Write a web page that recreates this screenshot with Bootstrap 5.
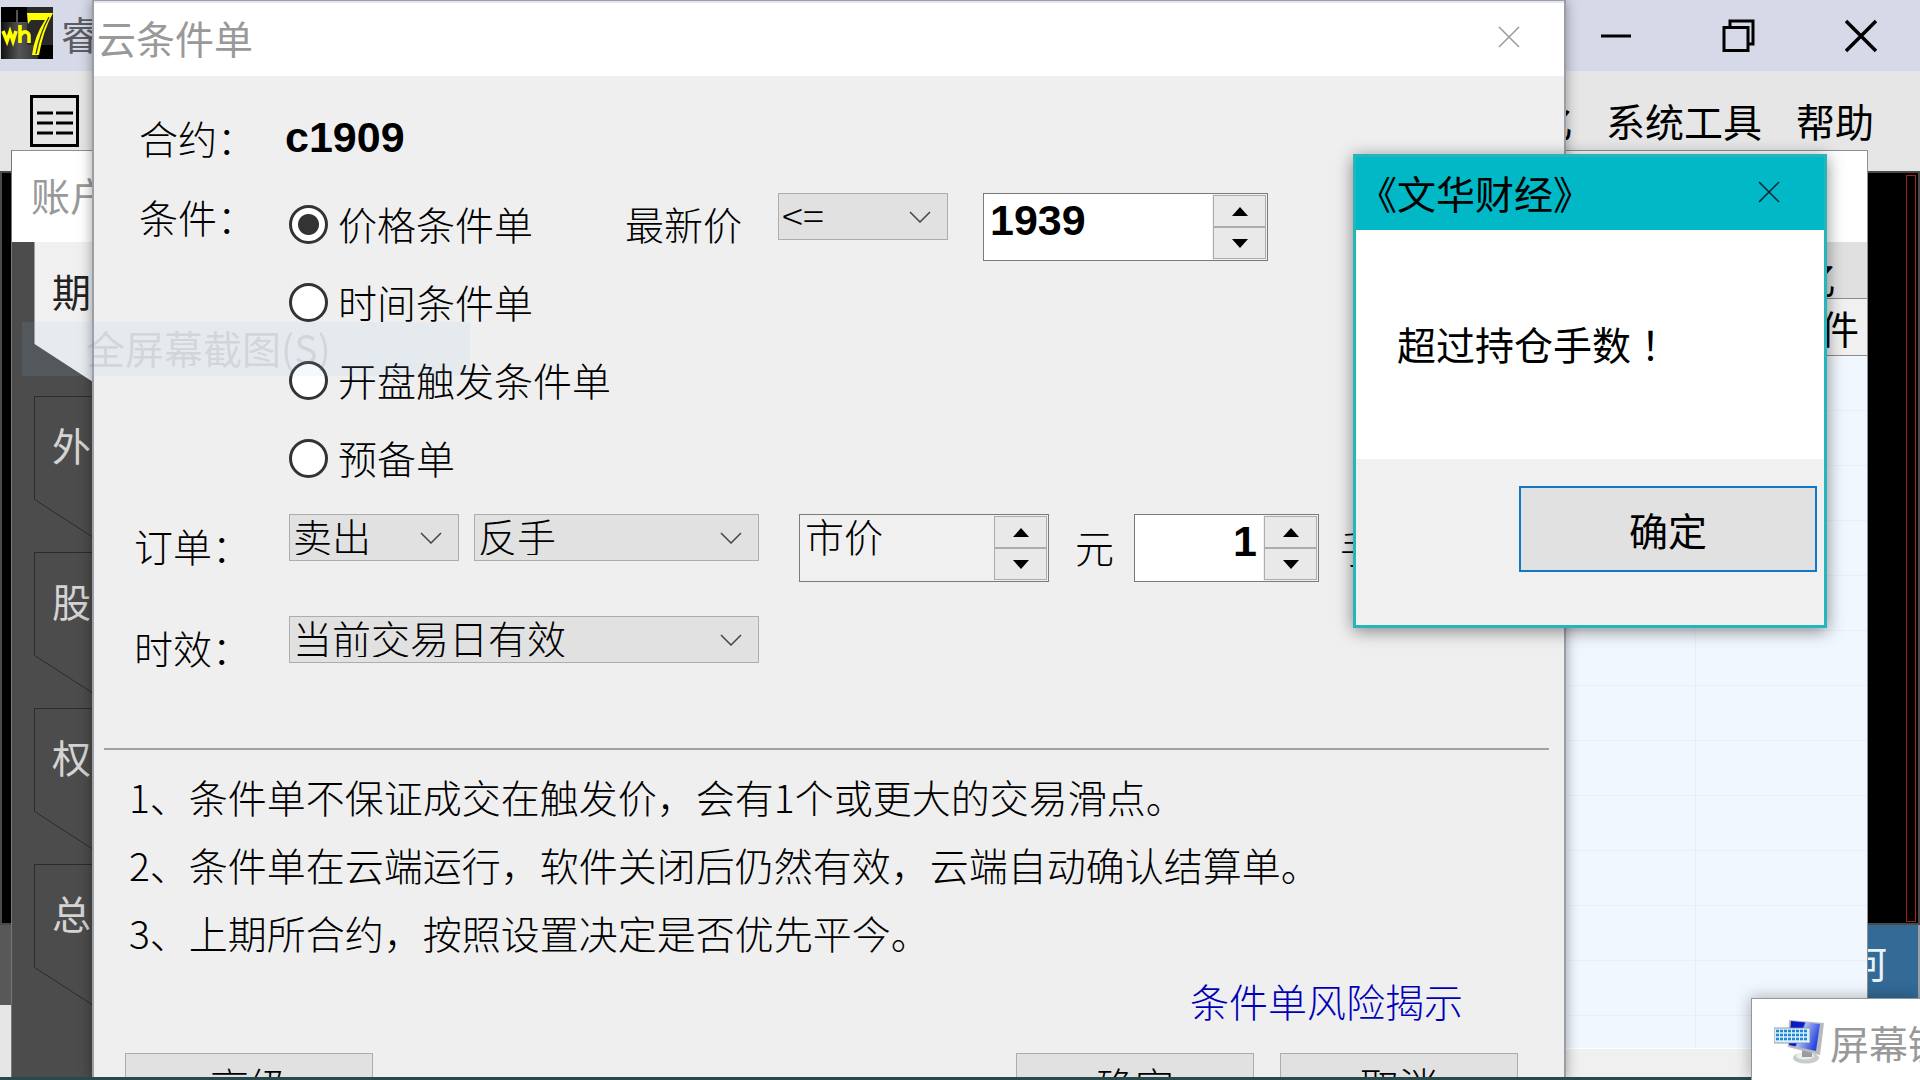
<!DOCTYPE html>
<html lang="zh-CN">
<head>
<meta charset="utf-8">
<meta name="viewport" content="width=device-width, initial-scale=1">
<title>云条件单</title>
<link href="https://cdn.jsdelivr.net/npm/bootstrap@5.3.0/dist/css/bootstrap.min.css" rel="stylesheet">
<style>
  body { font-family: "Noto Sans CJK SC", "Liberation Sans", sans-serif; font-size: 39px; line-height: 52px; color: #000; background: #e6e6e6; }
  svg { display: block; }
  .bare { border: 0; background: transparent; padding: 0; color: inherit; }
  .thin { font-weight: 300; }

  /* trading terminal behind the dialogs */
  .terminal { height: 100vh; }
  .term-title { height: 71px; background: #d6d9e8; padding: 0 43px 6px 1px; color: #5c5d63; }
  .term-controls { gap: 90px; color: #000; padding-top: 6px; }
  .term-menu { height: 100px; background: #e6e6e6; padding: 0 46px 0 30px; }
  .term-menu nav { gap: 34px; padding-bottom: 2px; }
  .term-menu a { color: #000; text-decoration: none; }
  .chart { height: 754px; background: #000; border: 2px solid #4a4a4a; }
  .chart-frame { width: 10px; margin: 2px 2px 1px; border: 1px solid #a32217; }
  .ticker { height: 80px; background: linear-gradient(90deg, #585858 0 50%, #336a96 50%); color: #e8f2fa; padding: 0 31px 8px 0; border-right: 2px solid #9aa0a5; }

  .win { position: absolute; }
  .win-title { color: #999; background: #fff; }

  /* account window */
  .account { left: 11px; right: 52px; top: 150px; bottom: 0; border: 1px solid #8f8f8f; border-bottom: 0; border-left-color: #777; }
  .account .win-title { height: 91px; padding: 17px 19px; }
  .acc-side { width: 220px; background: #4c4c4c; padding-left: 22px; }
  .acc-tab { position: relative; height: 156px; color: #d4d4d4; padding: 22px 18px; width: 100%; }
  .acc-tab.active { color: #222; height: 154px; }
  .acc-tab svg { position: absolute; left: 0; top: 0; }
  .acc-tab span { position: relative; }
  .acc-main { background: #f1f7fe; }
  .acc-tools { height: 56px; background: #e0e0e0; padding: 10px 31px 0 0; overflow: hidden; }
  .acc-head { height: 58px; background: #f0f0f0; border-top: 1px solid #8c8c8c; border-bottom: 1px solid #8c8c8c; padding-right: 8px; }
  .acc-grid { height: 693px; border-bottom: 1px solid #fff;
    background: linear-gradient(90deg, transparent calc(100% - 172px), #e9eff9 calc(100% - 172px) calc(100% - 171px), transparent calc(100% - 171px)), repeating-linear-gradient(#f1f7fe 0 54px, #e9eff9 54px 55px); }
  .acc-foot { background: #f0f0f0; }

  /* conditional order dialog */
  .order { left: 92px; right: 354px; top: 0; bottom: 0; border: 2px solid #9c9ea6; border-width: 1px 2px 0; background: #efefef; box-shadow: 0 0 12px rgba(0,0,0,.38); overflow: hidden; }
  .order .win-title { height: 75px; padding: 0 44px 5px 3px; border-top: 2px solid #e3e5f0; }
  .order-form { padding: 35px 10px 0; }
  .form-line { padding-left: 35px; }
  .form-line.low { padding-left: 30px; }
  .cap { width: 150px; flex: none; }
  .cap-near { width: 146px; }
  .low .cap { width: 155px; padding-top: 5px; }
  .bold-num { font-family: "Liberation Sans", Arial, sans-serif; font-weight: 700; font-size: 43px; }
  .cond-line { margin-top: 22px; }
  .cond-line .cap { padding-top: 5px; }
  .radio-line { height: 78px; gap: 10px; }
  .radio-line .form-check-input { width: 39px; height: 39px; margin: 0; border: 3px solid #333; background-color: #fff; flex: none; box-shadow: none; }
  .radio-line .form-check-input:checked { background-color: #fff; background-image: radial-gradient(circle, #333 0 10px, transparent 11px); }
  .radio-line label { padding-bottom: 2px; }
  .drop { height: 47px; width: 170px; flex: none; border: 1px solid #adadad; border-radius: 0; background-color: #e1e1e1; color: #000; font-size: 39px; line-height: 39px; font-weight: 300; padding: 0 48px 4px 3px;
    background-image: url("data:image/svg+xml,%3Csvg xmlns='http://www.w3.org/2000/svg' width='22' height='12'%3E%3Cpath d='M1 1l10 10 10-10' fill='none' stroke='%23444' stroke-width='1.5'/%3E%3C/svg%3E"); background-size: 22px 12px; background-position: right 16px center; }
  .spin { height: 68px; border: 1px solid #7a7a7a; background: #fff; flex: none; }
  .spin input { min-width: 0; flex: 1; border: 0; background: transparent; padding: 0 6px 14px; color: #000; line-height: 52px; }
  .spin.flat { background: #f0f0f0; }
  .spin.flat input { padding: 0 5px 26px; }
  .spin-btns { width: 55px; padding: 1px; background: #f0f0f0; }
  .spin-btns button { flex: 1; border: 1px solid #acacac; background: #e9e9e9; padding: 0; display: flex; align-items: center; justify-content: center; }
  .quote { padding-top: 8px; }
  .newest { width: 153px; margin-left: 14px; padding-top: 4px; white-space: nowrap; }
  .price { width: 285px; margin-left: 35px; }
  .side-line { margin-top: 17px; }
  .offset-type { width: 285px; margin-left: 15px; }
  .kind { width: 250px; margin-left: 40px; }
  .unit { padding: 6px 20px 0 26px; flex: none; }
  .qty { width: 185px; }
  .unit-last { padding: 6px 0 0 21px; flex: none; }
  .valid-line { margin-top: 34px; height: 58px; }
  .valid { width: 470px; }
  .rule { height: 2px; background: #a0a0a0; margin: 74px 5px 12px 0; }
  .notes { list-style: none; margin: 0; padding: 0 0 0 25px; line-height: 68px; }
  .risk { color: #0000b8; text-decoration: none; margin: 8px 91px 27px 0; }
  .win-btn { height: 69px; width: 238px; border: 1px solid #adadad; border-radius: 0; background: #e1e1e1; color: #000; font-size: 39px; line-height: 52px; padding: 0 0 8px; font-weight: 300; }
  .wide { width: 248px; }
  .order-foot { padding: 0 36px 0 21px; gap: 26px; }

  /* warning box */
  .alertbox { right: 93px; top: 154px; width: 474px; height: 474px; border: 3px solid #27b5bc; background: #fff; box-shadow: 0 3px 16px rgba(0,0,0,.45); }
  .alertbox header { height: 73px; background: #00b8c6; padding: 0 44px 4px 2px; }
  .alertbox main { height: 229px; padding: 87px 41px; }
  .alertbox footer { background: #f0f0f0; padding: 27px 7px 0; }
  .bang { font-family: "Noto Sans CJK TC", sans-serif; }
  .ok-btn { width: 298px; height: 86px; border: 2px solid #1277c4; font-weight: 400; padding: 0; }

  /* on-screen keyboard window and fading menu entry */
  .osk { left: calc(100% - 169px); right: 0; bottom: 0; height: 82px; background: #fff; border: 1px solid #8f979f; border-width: 1px 0 0 1px; box-shadow: -1px -1px 14px rgba(0,0,0,.28); color: #999; overflow: hidden; padding: 4px 0 0 22px; gap: 6px; }
  .ghost { left: 22px; top: 322px; width: 448px; height: 54px; background: rgba(150,200,245,.1); color: rgba(110,110,110,.17); padding-left: 64px; line-height: 50px; pointer-events: none; }
  .taskline { left: 0; right: 166px; bottom: 0; height: 3px; background: #274a4c; }
</style>
<script src="https://cdn.jsdelivr.net/npm/bootstrap@5.3.0/dist/js/bootstrap.bundle.min.js"></script>
</head>
<body class="overflow-hidden">
<div class="terminal position-relative overflow-hidden d-flex flex-column">

  <header class="term-title d-flex align-items-center">
    <svg width="52" height="52" viewBox="0 0 52 52" aria-label="wh7" role="img">
      <defs><linearGradient id="steel"><stop offset="0" stop-color="#111"/><stop offset=".35" stop-color="#555"/><stop offset=".7" stop-color="#333"/><stop offset="1" stop-color="#1a1a1a"/></linearGradient></defs>
      <rect width="52" height="52" fill="#000"/><rect y="15" width="52" height="37" fill="url(#steel)"/><rect x="26" width="26" height="38" fill="#292929"/><rect x="15" y="3" width="2" height="12" fill="#555"/><rect x="37" y="38" width="15" height="14" fill="#000"/>
      <path d="M2 24l4 10 3-9 3 9 3-10M19 18v18M19 29q3-5 6-4t3 4v7" fill="none" stroke="#ff0" stroke-width="3.6"/>
      <path d="M26 6h26q-10 18-14 42h-7q2-18 13-35H30l-3 4z" fill="#ff0"/><path d="M48 10q-9 16-13 37" fill="none" stroke="#333" stroke-width="1.3"/>
    </svg>
    <span class="ps-2 flex-grow-1">睿</span>
    <div class="term-controls d-flex align-items-center">
      <button class="bare" aria-label="最小化"><svg width="32" height="34"><path d="M1 17h30" stroke="#000" stroke-width="3"/></svg></button>
      <button class="bare" aria-label="还原"><svg width="33" height="34" fill="none" stroke="#000" stroke-width="3"><path d="M2 8.500h24v23h-24zM8 8v-6h23v23h-5"/></svg></button>
      <button class="bare" aria-label="关闭"><svg width="32" height="34" stroke="#000" stroke-width="3.500"><path d="M1 2l30 30M31 2l-30 30"/></svg></button>
    </div>
  </header>

  <div class="term-menu d-flex align-items-center justify-content-between">
    <button class="bare" aria-label="列表"><svg width="49" height="52" fill="none" stroke="#000" stroke-width="3"><path d="M1.500 1.500h46v49h-46zM7 18h16M26 18h17M7 28h16M26 28h17M7 38h16M26 38h17"/></svg></button>
    <nav class="d-flex"><a href="#">个性化</a><a href="#">系统工具</a><a href="#">帮助</a></nav>
  </div>
  <div class="chart d-flex justify-content-end"><div class="chart-frame"></div></div>
  <div class="ticker d-flex align-items-center justify-content-end"><span>任何</span></div>

  <section class="win account d-flex flex-column">
    <div class="win-title flex-shrink-0">账户</div>
    <div class="d-flex flex-grow-1">
      <div class="acc-side">
        <button class="bare acc-tab active d-flex align-items-start"><svg width="180" height="156"><path d="M.5 0v102l114 74h66V0z" fill="#f0f0f0"/></svg><span>期货</span></button>
        <button class="bare acc-tab d-flex align-items-start"><svg width="180" height="156"><path d="M180 .5H.5v103l90 58" fill="none" stroke="#2b2b2b"/></svg><span>外盘</span></button>
        <button class="bare acc-tab d-flex align-items-start"><svg width="180" height="156"><path d="M180 .5H.5v103l90 58" fill="none" stroke="#2b2b2b"/></svg><span>股票</span></button>
        <button class="bare acc-tab d-flex align-items-start"><svg width="180" height="156"><path d="M180 .5H.5v103l90 58" fill="none" stroke="#2b2b2b"/></svg><span>权益</span></button>
        <button class="bare acc-tab d-flex align-items-start"><svg width="180" height="156"><path d="M180 .5H.5v103l90 58" fill="none" stroke="#2b2b2b"/></svg><span>总计</span></button>
      </div>
      <div class="acc-main flex-grow-1 d-flex flex-column">
        <div class="acc-tools d-flex align-items-start justify-content-end">亿</div>
        <div class="acc-head d-flex align-items-center justify-content-end">条件</div>
        <div class="acc-grid"></div>
        <div class="acc-foot flex-grow-1"></div>
      </div>
    </div>
  </section>

  <section class="win order">
    <div class="win-title d-flex align-items-center justify-content-between">
      <span>云条件单</span>
      <button class="bare" aria-label="关闭"><svg width="22" height="22" stroke="#999" stroke-width="1.500"><path d="M1 1l20 20M21 1L1 21"/></svg></button>
    </div>
    <form class="order-form thin" onsubmit="return false">
      <div class="form-line d-flex"><span class="cap cap-near">合约：</span><output class="bold-num">c1909</output></div>

      <div class="form-line cond-line d-flex">
        <span class="cap">条件：</span>
        <div class="flex-shrink-0">
          <div class="radio-line d-flex align-items-center"><input class="form-check-input" type="radio" name="kind" id="k1" checked><label for="k1">价格条件单</label></div>
          <div class="radio-line d-flex align-items-center"><input class="form-check-input" type="radio" name="kind" id="k2"><label for="k2">时间条件单</label></div>
          <div class="radio-line d-flex align-items-center"><input class="form-check-input" type="radio" name="kind" id="k3"><label for="k3">开盘触发条件单</label></div>
          <div class="radio-line d-flex align-items-center"><input class="form-check-input" type="radio" name="kind" id="k4"><label for="k4">预备单</label></div>
        </div>
        <div class="quote d-flex align-items-start">
          <label for="op" class="newest">最新价</label>
          <select class="form-select drop" id="op"><option>&lt;=</option><option>&gt;=</option></select>
          <div class="spin price d-flex">
            <input class="bold-num" type="text" value="1939" aria-label="触发价格">
            <div class="spin-btns d-flex flex-column">
              <button type="button" aria-label="增加"><svg width="16" height="9"><path d="M0 9l8-9 8 9z"/></svg></button>
              <button type="button" aria-label="减少"><svg width="16" height="9"><path d="M0 0l8 9 8-9z"/></svg></button>
            </div>
          </div>
        </div>
      </div>

      <div class="form-line low side-line d-flex align-items-start">
        <label class="cap" for="side">订单：</label>
        <select class="form-select drop" id="side"><option>卖出</option><option>买入</option></select>
        <select class="form-select drop offset-type" aria-label="开平"><option>反手</option><option>开仓</option></select>
        <div class="spin flat kind d-flex">
          <input class="thin" type="text" value="市价" aria-label="委托价格">
          <div class="spin-btns d-flex flex-column">
            <button type="button" aria-label="增加"><svg width="16" height="9"><path d="M0 9l8-9 8 9z"/></svg></button>
            <button type="button" aria-label="减少"><svg width="16" height="9"><path d="M0 0l8 9 8-9z"/></svg></button>
          </div>
        </div>
        <span class="unit">元</span>
        <div class="spin qty d-flex">
          <input class="bold-num text-end" type="text" value="1" aria-label="手数">
          <div class="spin-btns d-flex flex-column">
            <button type="button" aria-label="增加"><svg width="16" height="9"><path d="M0 9l8-9 8 9z"/></svg></button>
            <button type="button" aria-label="减少"><svg width="16" height="9"><path d="M0 0l8 9 8-9z"/></svg></button>
          </div>
        </div>
        <span class="unit-last">手</span>
      </div>

      <div class="form-line low valid-line d-flex align-items-start">
        <label class="cap" for="valid">时效：</label>
        <select class="form-select drop valid" id="valid"><option>当前交易日有效</option><option>长期有效</option></select>
      </div>

      <div class="rule"></div>
      <ol class="notes">
        <li>1、条件单不保证成交在触发价，会有1个或更大的交易滑点。</li>
        <li>2、条件单在云端运行，软件关闭后仍然有效，云端自动确认结算单。</li>
        <li>3、上期所合约，按照设置决定是否优先平今。</li>
      </ol>
      <div class="d-flex justify-content-end"><a class="risk" href="#">条件单风险揭示</a></div>
      <div class="order-foot d-flex">
        <button class="btn win-btn wide me-auto" type="button">高级</button>
        <button class="btn win-btn" type="submit">确定</button>
        <button class="btn win-btn" type="button">取消</button>
      </div>
    </form>
  </section>

  <section class="win alertbox d-flex flex-column" role="alertdialog" aria-label="文华财经">
    <header class="d-flex align-items-center justify-content-between">
      <span>《文华财经》</span>
      <button class="bare" aria-label="关闭"><svg width="22" height="22" stroke="#123" stroke-width="1.500"><path d="M1 1l20 20M21 1L1 21"/></svg></button>
    </header>
    <main>超过持仓手数<span class="bang" lang="zh-TW">！</span></main>
    <footer class="flex-grow-1 d-flex align-items-start justify-content-end"><button class="btn win-btn ok-btn">确定</button></footer>
  </section>

  <div class="win taskline"></div>
  <section class="win osk d-flex align-items-center text-nowrap">
    <svg width="50" height="44" viewBox="0 0 50 44" class="flex-shrink-0">
      <defs><linearGradient id="scr" x2="1" y2=".4"><stop offset="0" stop-color="#0716b8"/><stop offset=".45" stop-color="#0a1fd0"/><stop offset=".5" stop-color="#aebcf5"/><stop offset="1" stop-color="#2b46e0"/></linearGradient></defs>
      <ellipse cx="32" cy="38" rx="13" ry="5.500" fill="#c9cccd"/><ellipse cx="31" cy="36" rx="9" ry="3.500" fill="#eceeee"/>
      <path d="M28 28l10 3v6h-10z" fill="#9a9d9f"/><path d="M15 0l35 3-4 32-32-8z" fill="#b8bbbd"/><path d="M17 1l29 3-4 27-27-6z" fill="url(#scr)"/>
      <path d="M0 8h36v15H0z" fill="#dceefa" stroke="#789" stroke-width=".8"/><path d="M2 11h32M2 15h32M2 19h32" stroke="#1f88d0" stroke-width="2.500" stroke-dasharray="3 1"/>
    </svg>
    <span>屏幕键盘</span>
  </section>
  <div class="win ghost text-nowrap">全屏幕截图(S)</div>
</div>
</body>
</html>
